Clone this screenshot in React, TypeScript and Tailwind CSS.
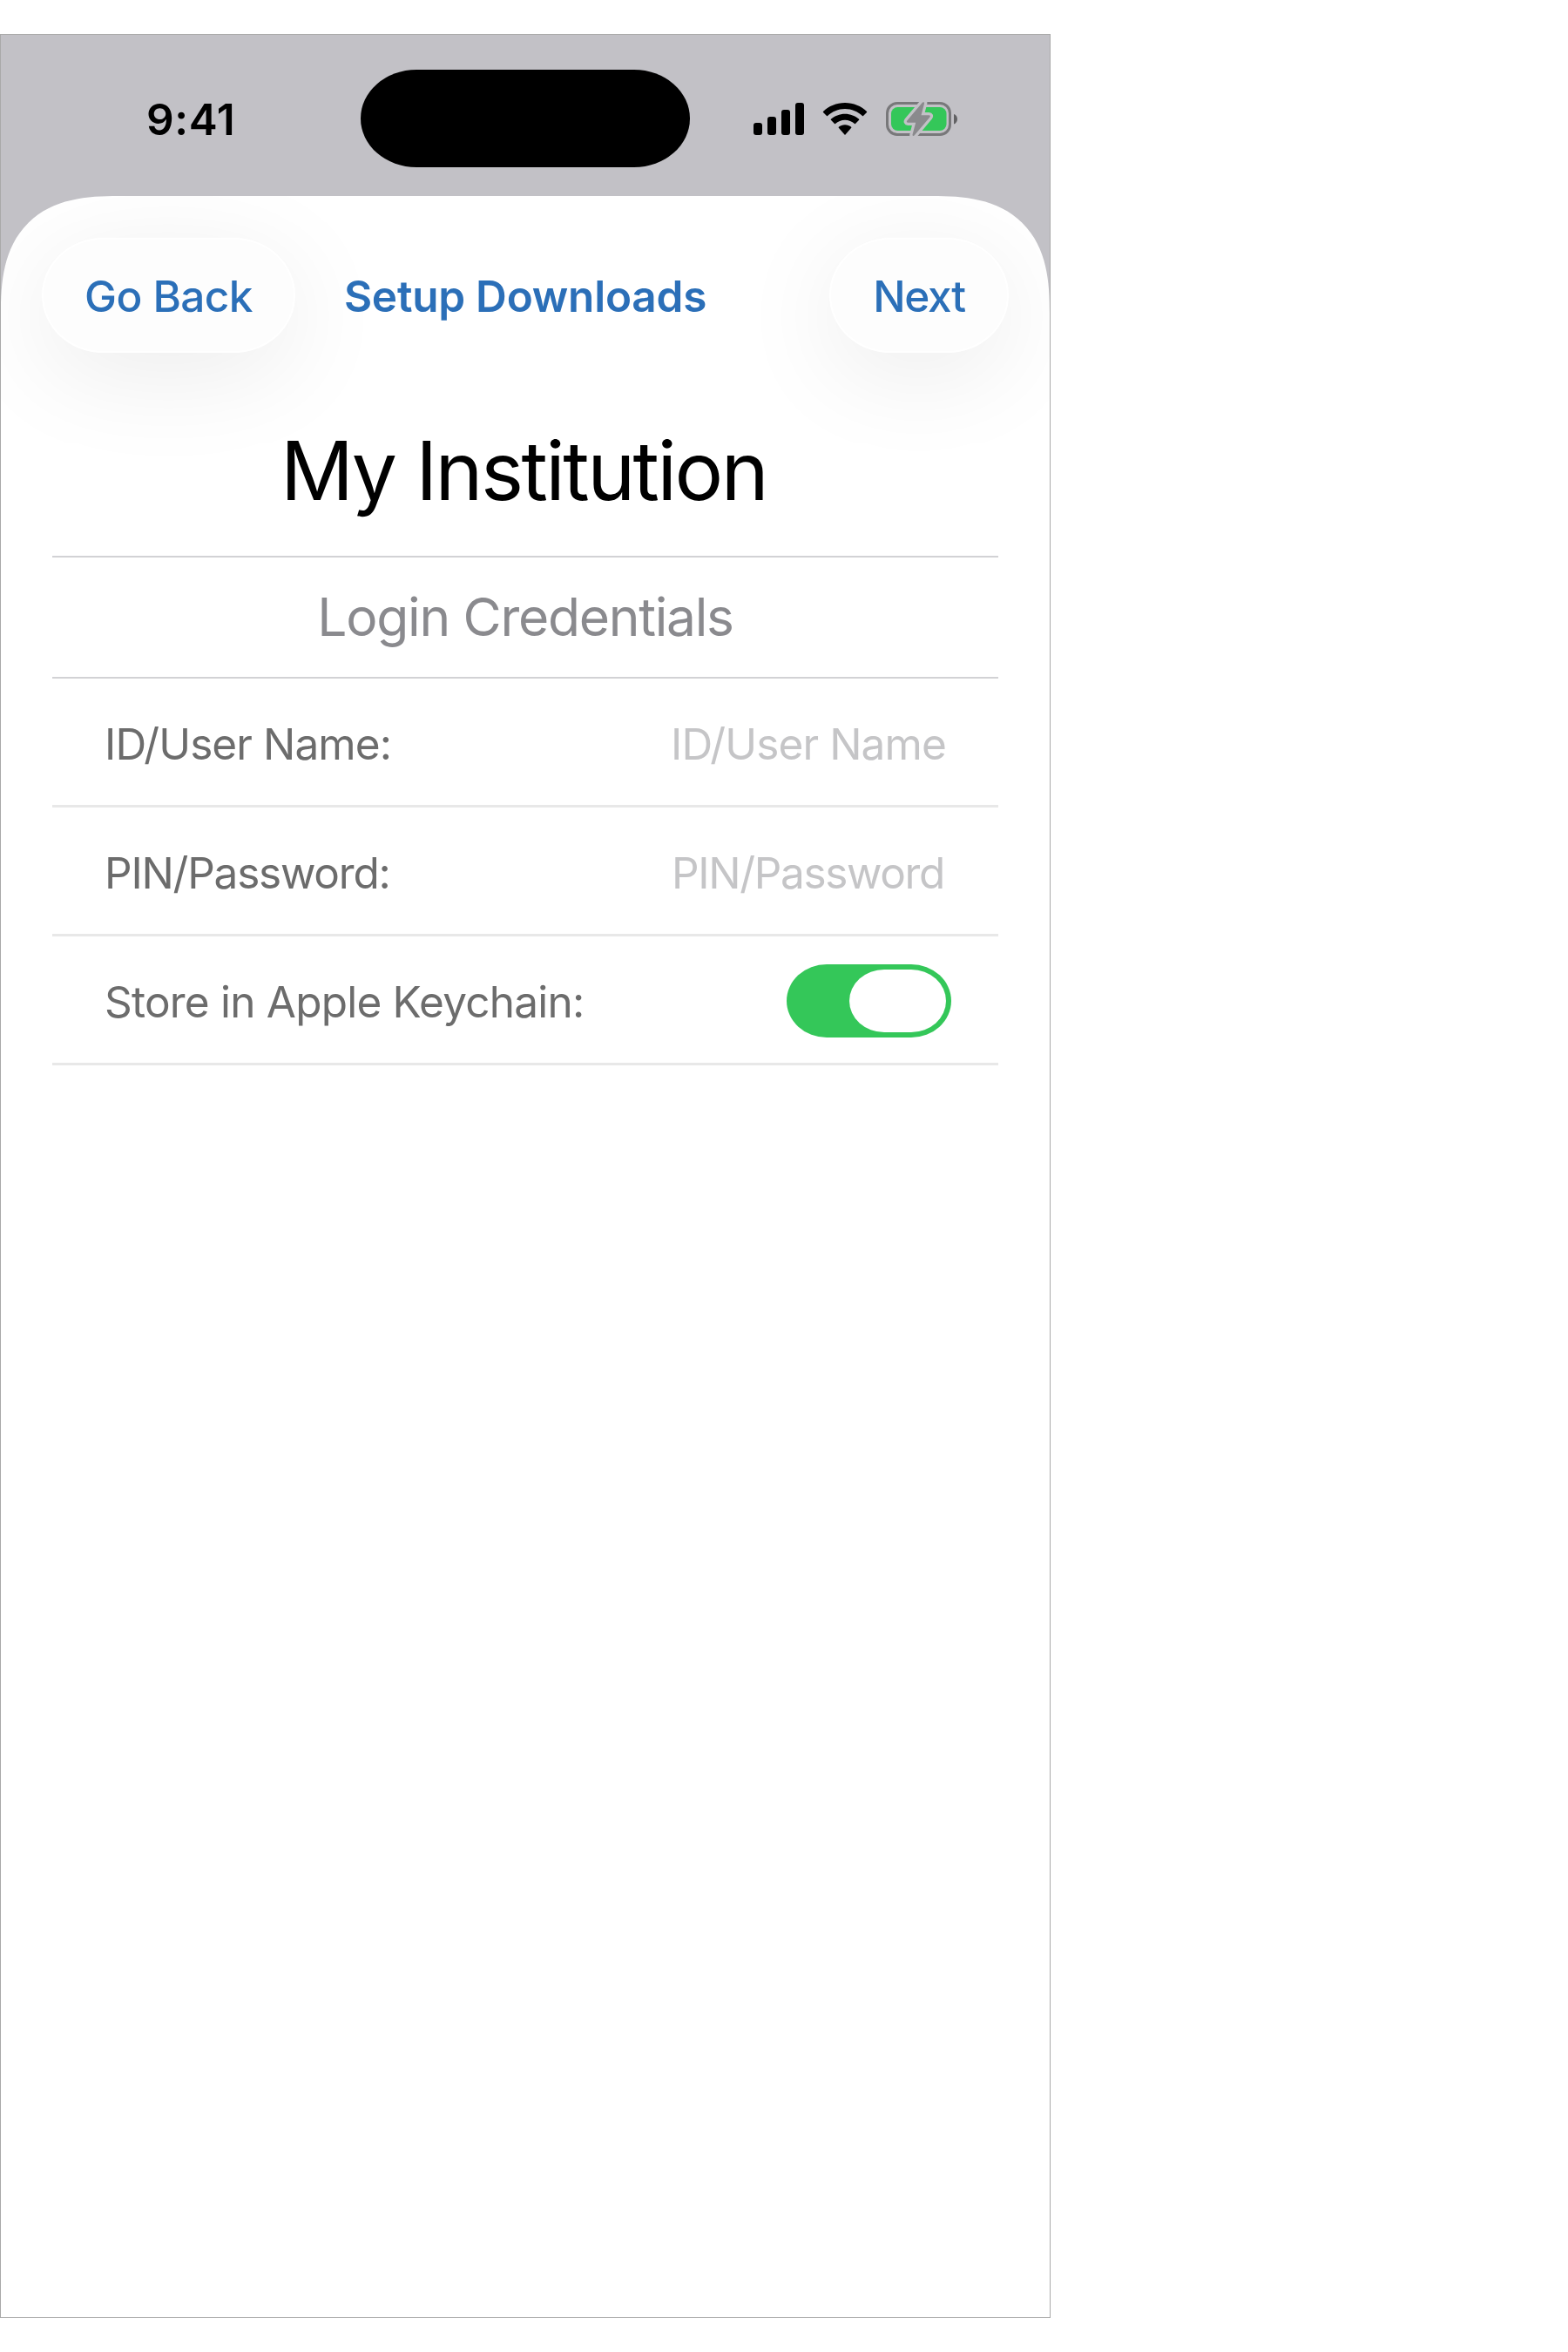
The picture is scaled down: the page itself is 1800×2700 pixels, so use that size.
import { useState } from "react";

function SignalIcon() {
  return (
    <svg width="58" height="38" viewBox="0 0 58 38" fill="#000">
      <rect x="0" y="23" width="10" height="14" rx="3" />
      <rect x="16" y="16" width="10" height="21" rx="3" />
      <rect x="32" y="8" width="10" height="29" rx="3" />
      <rect x="48" y="0" width="10" height="37" rx="3" />
    </svg>
  );
}

function WifiIcon() {
  return (
    <svg width="52" height="38" viewBox="0 0.5 52 38" fill="#000">
      <path d="M26 0.5C35.7 0.5 44.6 4.3 51 10.5C51.3 10.8 51.3 11.2 51 11.5L47 15.6C46.7 15.9 46.3 15.9 46 15.6C40.7 10.6 33.7 7.6 26 7.6C18.3 7.6 11.3 10.6 6 15.6C5.7 15.9 5.3 15.9 5 15.6L1 11.5C0.7 11.2 0.7 10.8 1 10.5C7.4 4.3 16.3 0.5 26 0.5Z" />
      <path d="M26 13.2C32.2 13.2 37.8 15.5 42.1 19.3C42.4 19.6 42.4 20 42.1 20.3L38 24.5C37.7 24.8 37.3 24.8 37 24.5C34 21.9 30.2 20.3 26 20.3C21.8 20.3 18 21.9 15 24.5C14.7 24.8 14.3 24.8 14 24.5L9.9 20.3C9.6 20 9.6 19.6 9.9 19.3C14.2 15.5 19.8 13.2 26 13.2Z" />
      <path d="M26 25.7C28.8 25.7 31.3 26.7 33.2 28.2C33.5 28.5 33.5 28.9 33.2 29.2L26.5 36.9C26.2 37.2 25.8 37.2 25.5 36.9L18.8 29.2C18.5 28.9 18.5 28.5 18.8 28.2C20.7 26.7 23.2 25.7 26 25.7Z" />
    </svg>
  );
}

function BatteryIcon() {
  return (
    <svg width="83" height="42" viewBox="0 0 83 42">
      <rect x="1.5" y="2.5" width="72" height="36" rx="11.5" fill="none" stroke="#78787a" strokeWidth="3" />
      <path d="M78 15C80.4 15.7 82 18 82 20.8C82 23.5 80.4 25.8 78 26.5Z" fill="#616163" />
      <rect x="6" y="7" width="63.5" height="27" rx="7.5" fill="#34c759" />
      <path
        d="M41.6 2L24.3 22.4C23.4 23.6 23.9 24.7 25.3 24.7H34.2L30.6 38.2C30.1 39.9 31.7 40.6 32.8 39.3L50.4 18.4C51.3 17.2 50.8 16.2 49.5 16.2H40.5L44 3C44.5 1.3 42.8 0.6 41.6 2Z"
        fill="#8a8a8d"
        stroke="#c2c1c6"
        strokeWidth="6.5"
        strokeLinejoin="round"
        paintOrder="stroke"
      />
    </svg>
  );
}

function StatusBar() {
  return (
    <div className="flex h-[185px] items-start justify-between pt-10">
      <div className="flex h-28 w-[413px] items-center pt-[3px] pl-[167px] text-[49.5px] font-semibold tracking-[0.6px]">
        9:41
      </div>
      <div className="h-[112px] w-[378px] rounded-[64px/56px] bg-black" />
      <div className="flex h-28 w-[413px] items-center gap-[21px] pt-0.5 pl-[73px]">
        <SignalIcon />
        <WifiIcon />
        <BatteryIcon />
      </div>
    </div>
  );
}

function NavButton({ label, className }: { label: string; className: string }) {
  return (
    <button
      className={`flex h-[132px] items-center justify-center rounded-[70px/66px] border-2 border-white bg-[#fdfdfd] pt-0.5 text-[49.5px] font-medium shadow-[0_24px_120px_rgba(0,0,0,0.08)] ${className}`}
    >
      {label}
    </button>
  );
}

function Row({ label, children }: { label: React.ReactNode; children: React.ReactNode }) {
  return (
    <div className="flex h-[148px] items-center justify-between border-b-3 border-[#e8e8e8] px-[60px] pt-[3px] text-[49.5px] text-[#6c6c6c]">
      {label}
      {children}
    </div>
  );
}

function Toggle({ on, onChange }: { on: boolean; onChange: (on: boolean) => void }) {
  return (
    <button
      role="switch"
      aria-checked={on}
      onClick={() => onChange(!on)}
      className={`-mr-1.5 flex h-[84px] w-[189px] items-center rounded-[46px/42px] p-1.5 ${
        on ? "justify-end bg-[#34c759]" : "justify-start bg-[#e9e9eb]"
      }`}
    >
      <span className="h-[72px] w-[111px] rounded-[40px/36px] bg-white" />
    </button>
  );
}

export default function App() {
  const [storeInKeychain, setStoreInKeychain] = useState(true);
  const inputClass = "w-[500px] bg-transparent pt-0.5 text-right text-black outline-none placeholder:text-[#c5c5c7]";

  return (
    <div className="h-[2700px] w-[1800px] bg-white pt-[39px] font-['Inter',sans-serif]">
      <div className="h-[2622px] w-[1206px] overflow-hidden border border-[#a9a9a9] bg-[#c2c1c6]">
        <StatusBar />

        {/* Sheet */}
        <div className="h-[2435px] overflow-hidden rounded-t-[135px] bg-white [corner-shape:superellipse(1.4)]">
          <div className="flex items-center px-[47px] pt-12 text-[#2b6fb8]">
            <div className="flex flex-1">
              <NavButton label="Go Back" className="w-[291px] tracking-[-0.6px]" />
            </div>
            <h1 className="pt-0.5 text-[49.5px] font-semibold tracking-[-0.23px]">Setup Downloads</h1>
            <div className="flex flex-1 justify-end">
              <NavButton label="Next" className="w-[206px] tracking-[-1.3px]" />
            </div>
          </div>

          <div className="px-[59px]">
            <h2 className="flex h-[235px] items-end justify-center border-b-2 border-[#d2d2d5] pr-1 pb-[42px] text-[93px] leading-[112px] tracking-[-2.56px] text-black">
              My Institution
            </h2>
            <h3 className="flex h-[139px] items-center justify-center border-b-2 border-[#d2d2d5] text-[60.5px] tracking-[-1.29px] text-[#8a8a8e]">
              Login Credentials
            </h3>
            <Row label={<span className="pt-0.5 tracking-[-0.9px]">ID/User Name:</span>}>
              <input className={`${inputClass} tracking-[-0.88px]`} placeholder="ID/User Name" />
            </Row>
            <Row label={<span className="pt-0.5 tracking-[-1.22px]">PIN/Password:</span>}>
              <input className={`${inputClass} pr-0.5 tracking-[-1.35px]`} type="password" placeholder="PIN/Password" />
            </Row>
            <Row label={<span className="pt-0.5 tracking-[-0.79px]">Store in Apple Keychain:</span>}>
              <Toggle on={storeInKeychain} onChange={setStoreInKeychain} />
            </Row>
          </div>
        </div>
      </div>
    </div>
  );
}
